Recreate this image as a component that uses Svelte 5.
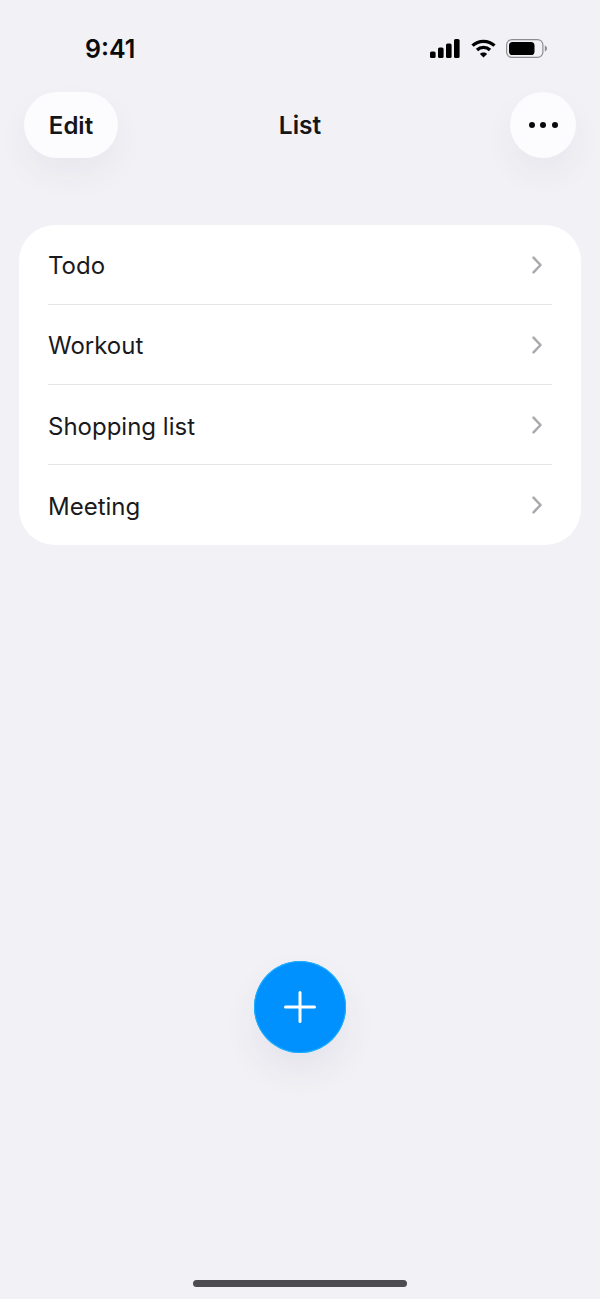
<script>
  const items = ['Todo', 'Workout', 'Shopping list', 'Meeting'];
</script>

<div class="screen">
  <div class="status">
    <span class="time">9:41</span>
    <div class="sysicons">
      <svg class="signal" width="30" height="19" viewBox="0 0 30 19" fill="#000">
        <rect x="0" y="12.5" width="5.6" height="6.5" rx="1.6" />
        <rect x="8" y="8.5" width="5.6" height="10.5" rx="1.6" />
        <rect x="16" y="4.5" width="5.6" height="14.5" rx="1.6" />
        <rect x="24" y="0" width="5.6" height="19" rx="1.6" />
      </svg>
      <svg class="wifi" width="25" height="19" viewBox="0 0 25 19" fill="none" stroke="#000" stroke-width="3.3">
        <path d="M1.5 6.6C7.6 .9 17.4 .9 23.5 6.6" />
        <path d="M6 11C9.6 7.6 15.4 7.6 19 11" />
        <path d="M12.5 18.6 8.9 14.9C11 13 14 13 16.1 14.9Z" fill="#000" stroke="none" />
      </svg>
      <svg class="battery" width="41" height="19" viewBox="0 0 41 19">
        <rect x=".6" y=".6" width="36.3" height="17.8" rx="5.4" fill="none" stroke="#8e8e90" stroke-width="1.2" />
        <rect x="3" y="3" width="25.5" height="13" rx="3.6" fill="#000" />
        <path d="M38.8 6.5C40.2 7 41 8.1 41 9.5S40.2 12 38.8 12.5Z" fill="#8e8e90" />
      </svg>
    </div>
  </div>

  <header class="nav">
    <button class="pill edit">Edit</button>
    <h1>List</h1>
    <button class="pill more" aria-label="More">
      <i></i><i></i><i></i>
    </button>
  </header>

  <ul class="list">
    {#each items as item, index}
      <li class:first={index === 0} class:low={index > 1}>
        <span>{item}</span>
        <svg width="12" height="20" viewBox="0 0 12 20" fill="none" stroke="#a9a9ad" stroke-width="2.5" stroke-linecap="round" stroke-linejoin="round">
          <path d="M2.5 2.7l7 7.3-7 7.3" />
        </svg>
      </li>
    {/each}
  </ul>

  <div class="spacer"></div>

  <div class="fab-row">
    <button class="fab" aria-label="Add">
      <svg width="32" height="32" viewBox="0 0 32 32" fill="none" stroke="#fff" stroke-width="3" stroke-linecap="round">
        <path d="M16 1.5v29M1.5 16h29" />
      </svg>
    </button>
  </div>

  <div class="home-row"><div class="home"></div></div>
</div>

<style>
  :global(body) {
    margin: 0;
    background: #f1f1f6;
  }

  .screen {
    width: 600px;
    height: 1299px;
    display: flex;
    flex-direction: column;
    background: #f1f1f6;
    color: #161618;
    font-family: Inter, "Liberation Sans", sans-serif;
    overflow: hidden;
  }

  .status {
    height: 92px;
    box-sizing: border-box;
    padding: 34px 53px 0 85px;
    display: flex;
    justify-content: space-between;
    align-items: flex-start;
  }

  .time {
    font-size: 25px;
    line-height: 30px;
    font-weight: 600;
    color: #0b0b0c;
  }

  .sysicons {
    display: flex;
    align-items: center;
    gap: 10.5px;
    padding-top: 5px;
  }

  .nav {
    height: 66px;
    padding: 0 24px;
    display: flex;
    align-items: center;
    justify-content: space-between;
    position: relative;
  }

  h1 {
    position: absolute;
    left: 0;
    right: 0;
    margin: 0;
    text-align: center;
    font-size: 24.5px;
    font-weight: 600;
    pointer-events: none;
  }

  .pill {
    height: 66px;
    border: 0;
    border-radius: 33px;
    background: #fcfcff;
    box-shadow: 0 16px 32px rgba(60, 60, 80, 0.05);
    color: inherit;
    font: inherit;
  }

  .edit {
    width: 94px;
    padding: 1px 0 0;
    font-size: 24px;
    font-weight: 600;
  }

  .more {
    width: 66px;
    padding: 0;
    display: flex;
    align-items: center;
    justify-content: center;
    gap: 5.5px;
  }

  .more i {
    width: 6px;
    height: 6px;
    border-radius: 50%;
    background: #0b0b0c;
  }

  .list {
    list-style: none;
    margin: 66.5px 19px 0;
    padding: 0 29px;
    background: #fff;
    border-radius: 36px;
  }

  li {
    height: 80px;
    box-sizing: border-box;
    border-top: 1px solid #e5e5e8;
    display: flex;
    align-items: center;
    justify-content: space-between;
    padding-right: 9px;
    font-size: 24px;
    font-weight: 400;
    color: #1a1a1c;
  }

  li.first {
    height: 79.5px;
    border-top: 0;
  }

  li:last-child {
    height: 81px;
  }

  li span {
    padding-top: 1px;
  }

  li.first span {
    padding-top: 2px;
  }

  li.first svg {
    margin-top: 1px;
  }

  li.low span {
    padding-top: 3px;
  }

  li:last-child svg {
    margin-bottom: 1px;
  }

  .spacer {
    flex: 1;
  }

  .fab-row {
    display: flex;
    justify-content: center;
    margin-bottom: 197px;
  }

  .fab {
    width: 92px;
    height: 92px;
    padding: 0;
    border: 0;
    border-radius: 50%;
    background: #0091ff;
    box-shadow: 0 0 0 1px #1fb0ff inset, 0 18px 36px rgba(60, 60, 80, 0.07);
    display: flex;
    align-items: center;
    justify-content: center;
  }

  .home-row {
    height: 49px;
    box-sizing: border-box;
    padding-top: 30px;
    display: flex;
    justify-content: center;
  }

  .home {
    width: 214px;
    height: 7px;
    border-radius: 4px;
    background: #4c4c50;
  }
</style>
